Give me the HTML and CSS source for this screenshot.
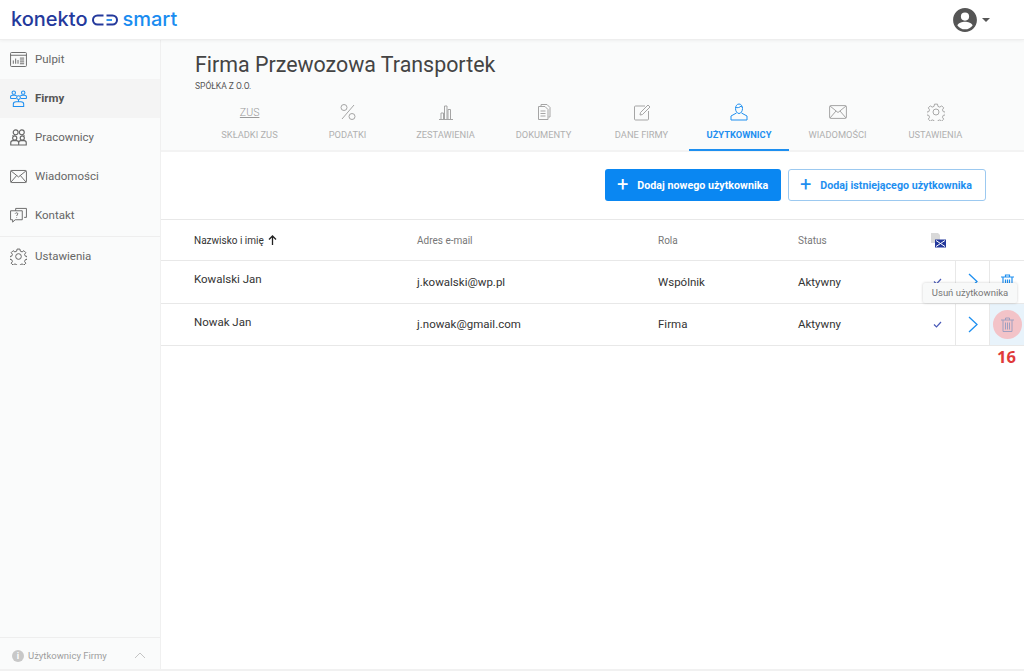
FILE: index.html
```html
<!DOCTYPE html>
<html lang="pl">
<head>
<meta charset="utf-8">
<title>Konekto Smart</title>
<link rel="stylesheet" href="styles.css">
</head>
<body>
<header class="topbar">
  <div class="logo">
    <span class="logo-a">konekto</span>
    <svg class="logo-mark" width="26" height="12" viewBox="0 0 26 12" fill="none" stroke-width="2"><path d="M11.500 1.500H5.500a4.500 4.500 0 0 0 0 9H11.500" stroke="#24399c"/><path d="M14.500 1.500H20.500a4.500 4.500 0 0 1 0 9H14.500" stroke="#24399c"/><path d="M14.500 6H20" stroke="#1a8cf0" stroke-width="1.800"/></svg>
    <span class="logo-b">smart</span>
  </div>
  <div class="account">
    <svg width="26" height="26" viewBox="0 0 24 24"><path fill="#555" d="M12 1C5.900 1 1 5.900 1 12s4.900 11 11 11 11-4.900 11-11S18.100 1 12 1zm0 4a3.800 3.800 0 1 1 0 7.600A3.800 3.800 0 0 1 12 5zm0 15.600c-2.900 0-5.500-1.400-7-3.600.1-2.300 4.700-3.500 7-3.500s6.900 1.200 7 3.500c-1.500 2.200-4.100 3.600-7 3.600z"/></svg>
    <span class="caret"></span>
  </div>
</header>
<div class="shell">
  <aside class="sidebar">
    <nav class="menu">
      <a class="menu-item"><svg class="mi" viewBox="0 0 18 16" fill="none" stroke="#666"><rect x=".6" y=".6" width="16.800" height="14.800" rx="1"/><path d="M.6 3.500H17.400M3.500 12.500V9M6 12.500V7M8.500 12.500V8.500M10.500 6.500H15M10.500 8.500H15M10.500 10.500H15M10.500 12.500H15"/></svg><span>Pulpit</span></a>
      <a class="menu-item active"><svg class="mi" viewBox="0 0 18 18" fill="none" stroke="#1e8ff0" stroke-width="1.100"><circle cx="4" cy="2.800" r="1.800"/><circle cx="14" cy="2.800" r="1.800"/><circle cx="9" cy="8" r="2"/><path d="M.6 9V7.200c0-1 1-1.700 2.400-1.700h2c1 0 1.600.3 2 .8M11 6.300c.4-.5 1-.8 2-.8h2c1.400 0 2.400.7 2.400 1.700V9M.6 9H6.500M11.500 9h5.900M9 10v2M3.500 17.400v-2.400c0-1.300 1.300-2.500 3-2.500h5c1.700 0 3 1.200 3 2.500v2.400z"/></svg><span>Firmy</span></a>
      <a class="menu-item"><svg class="mi" viewBox="0 0 18 18" fill="none" stroke="#666" stroke-width="1.200"><circle cx="6" cy="3.500" r="2.600"/><circle cx="12.500" cy="3.500" r="2.600"/><circle cx="5" cy="9.500" r="2.200"/><circle cx="13" cy="9.500" r="2.200"/><path d="M3 7.500V6.500M15 7.500V6.500M.8 17v-2.500c0-1.200 1-2.200 2.200-2.200h4c1.200 0 2.200 1 2.200 2.200V17zM9.200 17v-2.500c0-1.200 1-2.200 2.200-2.200h3.600c1.200 0 2.200 1 2.200 2.200V17z"/></svg><span>Pracownicy</span></a>
      <a class="menu-item"><svg class="mi" viewBox="0 0 18 14" fill="none" stroke="#666"><rect x=".6" y=".6" width="16.800" height="12.800" rx="1"/><path d="M1 1l8 6.500L17 1M1 13l6-7M17 13l-6-7"/></svg><span>Wiadomości</span></a>
      <a class="menu-item"><svg class="mi" viewBox="0 0 18 17" fill="none" stroke="#666"><path d="M6 3.500V1h11.400v9.500H15"/><path d="M.6 3.500H13v9.500H5.500L2.800 15.500V13H.6z"/><path d="M5.500 6.500c.5-1.200 2.800-1.200 2.800.3 0 1-1.300 1-1.300 2.200M7 10.300v.6"/></svg><span>Kontakt</span></a>
      <a class="menu-item separated"><svg class="mi" viewBox="0 0 24 24" fill="none" stroke="#666" stroke-width="1.400"><circle cx="12" cy="12" r="4"/><path d="M10 1.500h4l.6 3 2.500 1 2.500-1.700 2.700 2.700-1.700 2.500 1 2.500 2.900.6v3.800l-2.900.6-1 2.500 1.700 2.500-2.700 2.700-2.500-1.700-2.500 1-.6 2.900h-4l-.6-2.900-2.500-1-2.500 1.700-2.700-2.700 1.700-2.500-1-2.500-2.900-.6v-3.800l2.900-.6 1-2.500L1.700 6.500l2.700-2.700 2.500 1.700 2.500-1z"/></svg><span>Ustawienia</span></a>
    </nav>
    <footer class="side-foot">
      <span class="info">i</span>
      <span class="foot-label">Użytkownicy Firmy</span>
      <svg class="foot-chev" width="12" height="7" viewBox="0 0 12 7" fill="none" stroke="#c4c4c4"><path d="M1 6l5-5 5 5"/></svg>
    </footer>
  </aside>
  <main class="main">
    <section class="head">
      <h1>Firma Przewozowa Transportek</h1>
      <p class="sub">SPÓŁKA Z O.O.</p>
      <div class="tabs">
        <a class="tab"><span class="zus">ZUS</span><span>SKŁADKI ZUS</span></a>
        <a class="tab"><svg class="ti" viewBox="0 0 18 18" fill="none" stroke="#a5a5a5"><path d="M15 2L3 16"/><circle cx="5" cy="4.500" r="3"/><circle cx="13" cy="13.500" r="3"/></svg><span>PODATKI</span></a>
        <a class="tab"><svg class="ti" viewBox="0 0 18 18" fill="none" stroke="#a5a5a5"><path d="M2 16.500h14M4 16V10h2.500v6M7.500 16V3h2.500v13M11 16V6.500h2.500V16"/></svg><span>ZESTAWIENIA</span></a>
        <a class="tab"><svg class="ti" viewBox="0 0 18 18" fill="none" stroke="#a5a5a5"><path d="M6 3V1.500h6l3 3V14h-1.500"/><path d="M3.500 3.500H10l3 3v10H3.500z"/><path d="M5.500 8h5M5.500 10.500h5M5.500 13h5"/></svg><span>DOKUMENTY</span></a>
        <a class="tab"><svg class="ti" viewBox="0 0 18 18" fill="none" stroke="#a5a5a5"><path d="M12 3H2.500a1 1 0 0 0-1 1v12a1 1 0 0 0 1 1h12a1 1 0 0 0 1-1V8"/><path d="M7 12l.5-2.500L15 2l2 2-7.500 7.500z"/></svg><span>DANE FIRMY</span></a>
        <a class="tab current"><svg class="ti" viewBox="0 0 18 18" fill="none" stroke="#1e8ff0"><path d="M5.500 5.500C5.500 3 7 1 9 1s3.500 2 3.500 4.500S11 10.500 9 10.500 5.500 8 5.500 5.500zM5.500 4.500c2 .5 4.500 0 5.500-1.500.3.800.800 1.200 1.500 1.500"/><path d="M6.500 10L1 13v4h16v-4l-5.500-3"/></svg><span>UŻYTKOWNICY</span></a>
        <a class="tab"><svg class="ti" viewBox="0 0 18 14" fill="none" stroke="#a5a5a5"><rect x=".6" y=".6" width="16.800" height="12.800" rx="1"/><path d="M1 1l8 6.500L17 1M1 13l6-7M17 13l-6-7"/></svg><span>WIADOMOŚCI</span></a>
        <a class="tab"><svg class="ti" viewBox="0 0 24 24" fill="none" stroke="#a5a5a5" stroke-width="1.300"><circle cx="12" cy="12" r="4"/><path d="M10 1.500h4l.6 3 2.500 1 2.500-1.700 2.700 2.700-1.700 2.500 1 2.500 2.900.6v3.800l-2.900.6-1 2.500 1.700 2.500-2.700 2.700-2.500-1.700-2.500 1-.6 2.900h-4l-.6-2.900-2.500-1-2.500 1.700-2.700-2.700 1.700-2.500-1-2.500-2.900-.6v-3.800l2.900-.6 1-2.500L1.700 6.500l2.700-2.700 2.500 1.700 2.500-1z"/></svg><span>USTAWIENIA</span></a>
      </div>
    </section>
    <div class="actions">
      <button class="btn primary"><span class="plus">+</span>Dodaj nowego użytkownika</button>
      <button class="btn outline"><span class="plus">+</span>Dodaj istniejącego użytkownika</button>
    </div>
    <section class="table">
      <div class="row thead">
        <div class="c-name">Nazwisko i imię <svg class="sort" width="9" height="10" viewBox="0 0 9 10" fill="none" stroke="#222" stroke-width="1.300"><path d="M4.500 10V1M1 4.500L4.500 1 8 4.500"/></svg></div>
        <div class="c-mail">Adres e-mail</div>
        <div class="c-role">Rola</div>
        <div class="c-stat">Status</div>
        <div class="c-flag"><svg width="16" height="15" viewBox="0 0 16 15"><path fill="#d9d9d9" d="M1 0h7l2 2v8H1z"/><rect x="5" y="6.500" width="11" height="8" fill="#24399c"/><path d="M6 7.500l9 6M15 7.500l-9 6" stroke="#fff" stroke-width="1"/></svg></div>
        <div class="c-go"></div>
        <div class="c-del"></div>
      </div>
      <div class="row">
        <div class="c-name">Kowalski Jan</div>
        <div class="c-mail">j.kowalski@wp.pl</div>
        <div class="c-role">Wspólnik</div>
        <div class="c-stat">Aktywny</div>
        <div class="c-flag"><svg class="check" width="9" height="7" viewBox="0 0 9 7" fill="none" stroke="#4a5ab8" stroke-width="1.200"><path d="M1 3.500l2.500 2.500L8 1"/></svg></div>
        <div class="c-go cell-line"><svg class="chev" width="10" height="17" viewBox="0 0 10 17" fill="none" stroke="#1e8ff0" stroke-width="1.300"><path d="M1 1l8 7.500L1 16"/></svg></div>
        <div class="c-del cell-line"><svg class="bin" width="13" height="15" viewBox="0 0 13 15" fill="none" stroke="#1e8ff0" stroke-width="1.200"><path d="M0 3h13M4.500 3V1h4v2M2 3v11.500h9V3M4.500 5.500v7M6.500 5.500v7M8.500 5.500v7"/></svg></div>
      </div>
      <div class="row">
        <div class="c-name">Nowak Jan</div>
        <div class="c-mail">j.nowak@gmail.com</div>
        <div class="c-role">Firma</div>
        <div class="c-stat">Aktywny</div>
        <div class="c-flag"><svg class="check" width="9" height="7" viewBox="0 0 9 7" fill="none" stroke="#4a5ab8" stroke-width="1.200"><path d="M1 3.500l2.500 2.500L8 1"/></svg></div>
        <div class="c-go cell-line"><svg class="chev" width="10" height="17" viewBox="0 0 10 17" fill="none" stroke="#1e8ff0" stroke-width="1.300"><path d="M1 1l8 7.500L1 16"/></svg></div>
        <div class="c-del cell-line hot">
          <span class="hot-dot"><svg width="13" height="15" viewBox="0 0 13 15" fill="none" stroke="#a0a0c0"><path d="M0 3h13M4.500 3V1h4v2M2 3v11.500h9V3M4.500 5.500v7M6.500 5.500v7M8.500 5.500v7"/></svg></span>
          <span class="tooltip">Usuń użytkownika</span>
          <span class="step">16</span>
        </div>
      </div>
    </section>
  </main>
</div>
</body>
</html>
```

FILE: styles.css
```css
* { box-sizing: border-box; }
html, body { margin: 0; height: 100%; overflow: hidden; }
body { width: 1024px; height: 671px; font-family: Roboto, "Liberation Sans", sans-serif; background: #fff; color: #333; display: flex; flex-direction: column; }

.topbar { height: 40px; flex: none; display: flex; align-items: center; justify-content: space-between; padding: 0 34px 0 11px; background: #fff; border-bottom: 1px solid #eee; box-shadow: 0 1px 3px rgba(0,0,0,.05); position: relative; z-index: 2; }
.logo { display: flex; align-items: center; font-family: Inter, sans-serif; font-size: 20px; font-weight: 500; line-height: 1; margin-top: -2px; }
.logo-a { color: #24399c; }
.logo-b { color: #1a8cf0; }
.logo-mark { margin: 2px 4px 0 5px; }
.account { display: flex; align-items: center; gap: 4px; }
.caret { width: 0; height: 0; border: 4.500px solid transparent; border-top: 4.500px solid #555; border-bottom: 0; }

.shell { flex: 1; display: flex; min-height: 0; border-bottom: 2px solid #f1f1f1; }
.sidebar { width: 161px; flex: none; background: #fafbfb; border-right: 1px solid #f0f0f0; display: flex; flex-direction: column; justify-content: space-between; }
.menu { display: flex; flex-direction: column; }
.menu-item { height: 39px; display: flex; align-items: center; gap: 8px; padding: 0 0 1px 10px; font-size: 11.500px; color: #666; }
.menu-item.active { background: #f4f4f4; font-weight: 700; color: #555; }
.menu-item.separated { border-top: 1px solid #eee; height: 40px; margin-top: 1px; }
.mi { width: 17px; height: 17px; flex: none; }
.side-foot { height: 32px; border-top: 1px solid #eee; display: flex; align-items: center; padding: 4px 14px 0 12px; font-size: 9.500px; color: #9e9e9e; }
.info { width: 12px; height: 12px; border-radius: 50%; background: #c8c8c8; color: #fff; font-size: 9px; font-weight: 700; display: flex; align-items: center; justify-content: center; margin-right: 4px; }
.foot-label { flex: 1; }

.main { flex: 1; min-width: 0; }
.head { height: 112px; background: #fafbfb; border-bottom: 2px solid #f3f3f3; padding: 12px 0 0 34px; }
h1 { margin: 0; font-size: 21.400px; font-weight: 400; line-height: 26px; color: #444; }
.sub { margin: 3px 0 0; font-size: 8.500px; line-height: 11px; color: #555; }
.tabs { display: flex; margin: 11px 0 0 5.500px; }
.tab { width: 98px; height: 48px; display: flex; flex-direction: column; align-items: center; font-size: 9.300px; color: #b0b0b0; }
.tab > span:last-child { margin-top: auto; padding-bottom: 11px; line-height: 11px; }
.tab .zus { font-size: 11.500px; font-weight: 300; line-height: 13px; height: 16px; margin-top: 3px; color: #999; text-decoration: underline; transform: scaleX(.92); }
.ti { width: 18px; height: 18px; }
.tab.current { color: #1e8ff0; font-weight: 700; border-bottom: 2px solid #1e8ff0; width: 100px; margin: 0 -.5px 0 -1.500px; }
.tab.current > span:last-child { padding-bottom: 9px; }

.actions { height: 67px; display: flex; justify-content: flex-end; align-items: flex-start; gap: 7px; padding: 17px 38px 0 0; }
.btn { height: 32px; border-radius: 3px; font-family: Roboto, sans-serif; font-size: 10.700px; font-weight: 700; display: flex; align-items: center; padding: 0; cursor: pointer; }
.plus { font-size: 20px; font-weight: 400; line-height: 1; margin-right: 9px; margin-top: -2px; }
.primary { width: 176px; background: #0a87f2; color: #fff; border: 0; padding-left: 12px; }
.outline { width: 198px; background: #fff; color: #1e8ff0; border: 1px solid #9cc9f0; padding-left: 11px; }

.table { border-top: 1px solid #e8e8e8; }
.row { display: grid; grid-template-columns: 256px 241px 140px 130px 27px 34px 35px; height: 42.500px; align-items: stretch; border-bottom: 1px solid #e8e8e8; font-size: 11.500px; color: #333; }
.row > div { display: flex; align-items: center; }
.thead { height: 41px; font-size: 10px; color: #777; }
.row > .c-name { padding: 0 0 5px 33px; }
.thead > .c-name { color: #333; padding-bottom: 0; }
.sort { margin-left: 4px; }
.c-flag { justify-content: flex-end; padding-right: 13px; }
.thead .c-flag { padding-right: 9px; }
.cell-line { border-left: 1px solid #e8e8e8; justify-content: center; }
.chev { display: block; }
.hot { background: #e8f3fb; position: relative; }
.hot-dot { width: 29px; height: 29px; border-radius: 50%; background: #f3c3c8; display: flex; align-items: center; justify-content: center; }
.tooltip { position: absolute; right: 7px; top: -21px; width: 94px; height: 20px; background: #f8f9f9; border-radius: 2px; box-shadow: 0 0 3px rgba(0,0,0,.2); font-size: 9.500px; color: #777; display: flex; align-items: center; justify-content: center; white-space: nowrap; }
.step { position: absolute; top: 43px; left: 7px; font-family: "Open Sans", sans-serif; font-size: 16.500px; line-height: 20px; font-weight: 700; color: #e03a3a; }
```
